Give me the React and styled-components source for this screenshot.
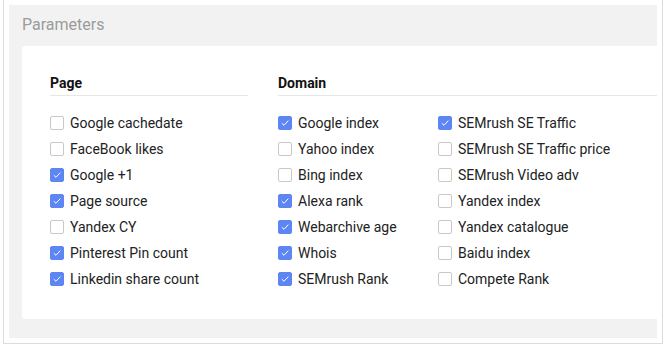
import React from "react";
import styled, { createGlobalStyle } from "styled-components";

const GlobalStyle = createGlobalStyle`
  body {
    margin: 0;
    background: #fff;
    font-family: Roboto, "Liberation Sans", sans-serif;
  }
`;

const Frame = styled.div`
  width: 660px;
  box-sizing: border-box;
  margin-left: 3px;
  padding: 5px;
  border: 1px solid #dcdcdc;
  border-top: none;
`;

const Panel = styled.div`
  background: #f2f2f2;
  padding: 0 0 19px 13px;
`;

const PanelTitle = styled.div`
  height: 41px;
  display: flex;
  align-items: center;
  font-size: 16px;
  color: #9b9b9b;
  padding-bottom: 2px;
  box-sizing: border-box;
`;

const Card = styled.div`
  background: #fff;
  border-radius: 3px 0 0 3px;
  padding: 27px 0 27px 28px;
  display: flex;
  gap: 30px;
`;

const Group = styled.div`
  width: ${(p) => p.width || "auto"};
  flex: ${(p) => (p.grow ? 1 : "none")};
`;

const GroupTitle = styled.div`
  font-size: 14px;
  font-weight: 700;
  color: #111;
  line-height: 20px;
  padding-bottom: 2px;
  border-bottom: 1px solid #e6e6e6;
  margin-bottom: 14px;
`;

const Columns = styled.div`
  display: flex;
`;

const List = styled.div`
  width: ${(p) => p.width || "auto"};
  display: flex;
  flex-direction: column;
`;

const Row = styled.label`
  height: 26px;
  display: flex;
  align-items: center;
  font-size: 14px;
  color: #222;
`;

const Box = styled.span`
  width: 14px;
  height: 14px;
  box-sizing: border-box;
  border-radius: 2px;
  margin-right: 6px;
  display: flex;
  align-items: center;
  justify-content: center;
  background: ${(p) => (p.checked ? "#5d86f4" : "#fff")};
  border: 1px solid ${(p) => (p.checked ? "#5d86f4" : "#c9c9c9")};
`;

const Check = ({ checked, label }) => (
  <Row>
    <Box checked={checked}>
      {checked && (
        <svg width="10" height="10" viewBox="0 0 10 10">
          <polyline
            points="1.8,5.2 4,7.3 8.3,2.6"
            fill="none"
            stroke="#fff"
            strokeWidth="1"
          />
        </svg>
      )}
    </Box>
    {label}
  </Row>
);

const page = [
  ["Google cachedate", false],
  ["FaceBook likes", false],
  ["Google +1", true],
  ["Page source", true],
  ["Yandex CY", false],
  ["Pinterest Pin count", true],
  ["Linkedin share count", true],
];

const domainA = [
  ["Google index", true],
  ["Yahoo index", false],
  ["Bing index", false],
  ["Alexa rank", true],
  ["Webarchive age", true],
  ["Whois", true],
  ["SEMrush Rank", true],
];

const domainB = [
  ["SEMrush SE Traffic", true],
  ["SEMrush SE Traffic price", false],
  ["SEMrush Video adv", false],
  ["Yandex index", false],
  ["Yandex catalogue", false],
  ["Baidu index", false],
  ["Compete Rank", false],
];

const renderList = (items) =>
  items.map(([label, checked]) => (
    <Check key={label} label={label} checked={checked} />
  ));

export default function App() {
  return (
    <>
      <GlobalStyle />
      <Frame>
        <Panel>
          <PanelTitle>Parameters</PanelTitle>
          <Card>
            <Group width="198px">
              <GroupTitle>Page</GroupTitle>
              <List>{renderList(page)}</List>
            </Group>
            <Group grow>
              <GroupTitle>Domain</GroupTitle>
              <Columns>
                <List width="160px">{renderList(domainA)}</List>
                <List>{renderList(domainB)}</List>
              </Columns>
            </Group>
          </Card>
        </Panel>
      </Frame>
    </>
  );
}
